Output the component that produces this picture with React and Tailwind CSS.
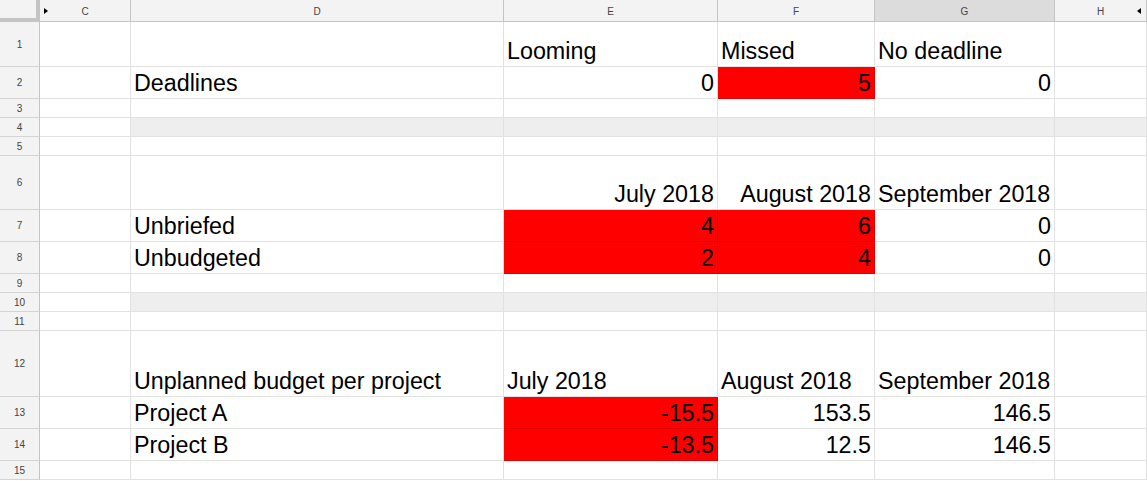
import React from "react";

const COLS = [
  { key: "C", w: "w-[91px]" },
  { key: "D", w: "w-[373px]" },
  { key: "E", w: "w-[214px]" },
  { key: "F", w: "w-[157px]" },
  { key: "G", w: "w-[180px]" },
  { key: "H", w: "flex-1" },
];

const L = (t) => ({ t, a: "l" });
const R = (t, red) => ({ t, a: "r", red });

const ROWS = [
  { n: 1, h: "h-[45px]", c: { E: L("Looming"), F: L("Missed"), G: L("No deadline") } },
  { n: 2, h: "h-[32px]", c: { D: L("Deadlines"), E: R("0"), F: R("5", true), G: R("0") } },
  { n: 3, h: "h-[19px]", c: {} },
  { n: 4, h: "h-[19px]", c: {}, gray: true },
  { n: 5, h: "h-[19px]", c: {} },
  { n: 6, h: "h-[54px]", c: { E: R("July 2018"), F: R("August 2018"), G: L("September 2018") } },
  { n: 7, h: "h-[32px]", c: { D: L("Unbriefed"), E: R("4", true), F: R("6", true), G: R("0") } },
  { n: 8, h: "h-[32px]", c: { D: L("Unbudgeted"), E: R("2", true), F: R("4", true), G: R("0") } },
  { n: 9, h: "h-[19px]", c: {} },
  { n: 10, h: "h-[19px]", c: {}, gray: true },
  { n: 11, h: "h-[19px]", c: {} },
  { n: 12, h: "h-[66px]", c: { D: L("Unplanned budget per project"), E: L("July 2018"), F: L("August 2018"), G: L("September 2018") } },
  { n: 13, h: "h-[32px]", c: { D: L("Project A"), E: R("-15.5", true), F: R("153.5"), G: R("146.5") } },
  { n: 14, h: "h-[32px]", c: { D: L("Project B"), E: R("-13.5", true), F: R("12.5"), G: R("146.5") } },
  { n: 15, h: "h-[19px]", c: {} },
];

function Cell({ col, data, gray }) {
  const red = data && data.red;
  const bg = red ? "bg-[#ff0000] border-[#e00000]" : gray && col.key !== "C" ? "bg-[#eeeeee] border-[#e2e2e2]" : "bg-white border-[#e2e2e2]";
  return (
    <div
      className={`${col.w} shrink-0 h-full border-r border-b ${bg} flex items-end overflow-hidden whitespace-nowrap px-[3px] pb-[1px] ${
        data && data.a === "r" ? "justify-end" : "justify-start"
      }`}
    >
      {data && <span className="text-[23.3px] leading-[27px] text-black">{data.t}</span>}
    </div>
  );
}

export default function App() {
  return (
    <div className="w-[1147px] h-[481px] overflow-hidden bg-white select-none" style={{ fontFamily: '"Liberation Sans", Arial, sans-serif' }}>
      {/* header row */}
      <div className="flex h-[22px]">
        <div className="w-[40px] shrink-0 h-full bg-[#f3f3f3] border-r-4 border-b-4 border-[#c4c4c4]" />
        {COLS.map((c) => (
          <div
            key={c.key}
            className={`${c.w} shrink-0 h-full border-r border-b border-[#c4c4c4] relative flex items-center justify-center text-[10px] text-[#444] ${
              c.key === "G" ? "bg-[#dcdcdc]" : "bg-[#f3f3f3]"
            }`}
          >
            {c.key === "C" && (
              <span className="absolute left-[4px] top-[8px] w-0 h-0 border-y-[3px] border-y-transparent border-l-[4px] border-l-black" />
            )}
            {c.key === "H" && (
              <span className="absolute right-[5px] top-[8px] w-0 h-0 border-y-[3px] border-y-transparent border-r-[4px] border-r-black" />
            )}
            <span className="pt-[1px]">{c.key}</span>
          </div>
        ))}
      </div>
      {ROWS.map((r) => (
        <div key={r.n} className={`flex ${r.h}`}>
          <div className="w-[40px] shrink-0 h-full bg-[#f3f3f3] border-r border-b border-r-[#c4c4c4] border-b-[#d4d4d4] flex items-center justify-center text-[10px] text-[#444]">
            {r.n}
          </div>
          {COLS.map((c) => (
            <Cell key={c.key} col={c} data={r.c[c.key]} gray={r.gray} />
          ))}
        </div>
      ))}
    </div>
  );
}
